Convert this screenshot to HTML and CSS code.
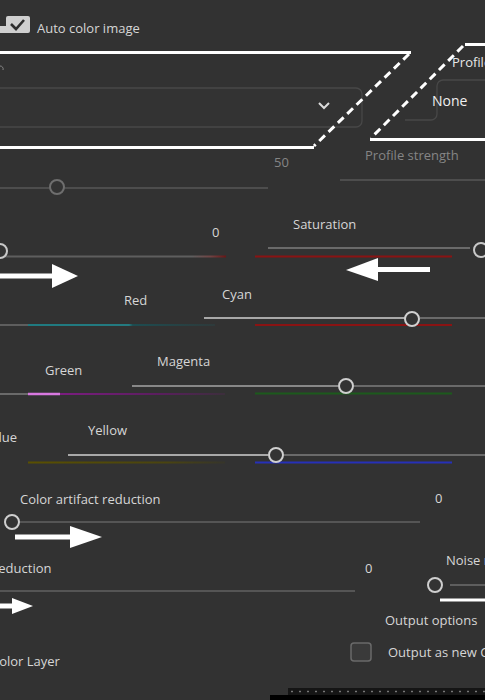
FILE: index.html
```html
<!DOCTYPE html>
<html>
<head>
<meta charset="utf-8">
<link rel="stylesheet" href="styles.css">
</head>
<body>
<div class="canvas">
  <svg class="gfx" width="485" height="700" viewBox="0 0 485 700">
    <defs>
      <linearGradient id="gr1" gradientUnits="userSpaceOnUse" x1="0" y1="0" x2="226" y2="0">
        <stop offset="0" stop-color="#5e5e5e"/><stop offset="0.85" stop-color="#5e5e5e"/><stop offset="0.93" stop-color="#704444"/><stop offset="1" stop-color="#6a1515"/>
      </linearGradient>
      <linearGradient id="teal" gradientUnits="userSpaceOnUse" x1="28" y1="0" x2="215" y2="0">
        <stop offset="0" stop-color="#1f7a80"/><stop offset="0.54" stop-color="#247a80"/><stop offset="0.56" stop-color="#1d4c50"/><stop offset="1" stop-color="#2e3a3b"/>
      </linearGradient>
      <linearGradient id="mag" gradientUnits="userSpaceOnUse" x1="60" y1="0" x2="225" y2="0">
        <stop offset="0" stop-color="#7b1d80"/><stop offset="0.6" stop-color="#5a1e5e"/><stop offset="1" stop-color="#3c2f3c"/>
      </linearGradient>
      <linearGradient id="oli" gradientUnits="userSpaceOnUse" x1="28" y1="0" x2="225" y2="0">
        <stop offset="0" stop-color="#5a5000"/><stop offset="0.7" stop-color="#4a4410"/><stop offset="1" stop-color="#36352a"/>
      </linearGradient>
    </defs>
    <!-- checkbox -->
    <rect x="6" y="16" width="24" height="17" rx="2" fill="#cfcfcf"/>
    <rect x="0" y="26" width="10" height="7" fill="#cfcfcf"/>
    <path d="M11 24 l5 5 l8 -9" stroke="#2e2e2e" stroke-width="2.6" fill="none"/>
    <!-- dropdown -->
    <path d="M0 88 H356 a6 6 0 0 1 6 6 V121 a6 6 0 0 1 -6 6 H0" stroke="#484848" stroke-width="1.3" fill="#333"/>
    <path d="M319 103 l5 5 l5 -5" stroke="#dcdcdc" stroke-width="2" fill="none"/>
    <path d="M0 66 a3 3 0 0 1 3 4" stroke="#888" stroke-width="1" fill="none"/>
    <!-- None box -->
    <path d="M485 80 H443 a6 6 0 0 0 -6 6 V114 a6 6 0 0 1 -6 6 H405" stroke="#484848" stroke-width="1.3" fill="none"/>
    <!-- annotation parallelograms -->
    <path d="M0 52.5 H411" stroke="#fff" stroke-width="3"/>
    <path d="M0 147.5 H314" stroke="#fff" stroke-width="3"/>
    <path d="M409 54 L314 146" stroke="#fff" stroke-width="3" stroke-dasharray="8 5"/>
    <path d="M465 44.5 H485" stroke="#fff" stroke-width="3"/>
    <path d="M463 46 L371 138" stroke="#fff" stroke-width="3" stroke-dasharray="8 5"/>
    <path d="M370 139.5 H485" stroke="#fff" stroke-width="3"/>
    <!-- profile strength track -->
    <path d="M340 180 H485" stroke="#4d4d4d" stroke-width="2"/>
    <!-- track 1 -->
    <path d="M0 188 H268" stroke="#4d4d4d" stroke-width="2"/>
    <circle cx="57" cy="187" r="7" fill="#333" stroke="#6e6e6e" stroke-width="2"/>
    <!-- saturation -->
    <path d="M268 248 H470" stroke="#6a6a6a" stroke-width="2"/>
    <circle cx="481" cy="250" r="7" fill="#333" stroke="#c8c8c8" stroke-width="2"/>
    <path d="M255 256.5 H452" stroke="#8a1313" stroke-width="2"/>
    <path d="M0 256.5 H226" stroke="url(#gr1)" stroke-width="2"/>
    <circle cx="0" cy="251" r="7" fill="#333" stroke="#c8c8c8" stroke-width="2"/>
    <!-- arrows -->
    <path d="M0 276 H62" stroke="#fff" stroke-width="5"/>
    <path d="M52 264 L78 276 L52 288 Z" fill="#fff"/>
    <path d="M430 269.5 H370" stroke="#fff" stroke-width="5"/>
    <path d="M378 258 L346 270 L378 281 Z" fill="#fff"/>
    <!-- cyan/red -->
    <path d="M204 318 H405" stroke="#a8a8a8" stroke-width="2"/>
    <path d="M420 318 H485" stroke="#6a6a6a" stroke-width="2"/>
    <path d="M255 325 H452" stroke="#8a1313" stroke-width="2"/>
    <circle cx="412" cy="319" r="7" fill="#333" stroke="#d0d0d0" stroke-width="2"/>
    <path d="M0 325 H28" stroke="#5e5e5e" stroke-width="2"/>
    <path d="M28 325 H215" stroke="url(#teal)" stroke-width="2"/>
    <!-- magenta/green -->
    <path d="M132 386 H338" stroke="#888" stroke-width="2"/>
    <path d="M354 386 H485" stroke="#6a6a6a" stroke-width="2"/>
    <path d="M255 393.5 H452" stroke="#1c5a1c" stroke-width="2"/>
    <circle cx="346" cy="386" r="7" fill="#333" stroke="#cfcfcf" stroke-width="2"/>
    <path d="M0 394 H28" stroke="#6a6a6a" stroke-width="2"/>
    <path d="M28 394 H60" stroke="#d878e0" stroke-width="2.5"/>
    <path d="M60 394 H225" stroke="url(#mag)" stroke-width="2"/>
    <!-- yellow/blue -->
    <path d="M68 455 H268" stroke="#a8a8a8" stroke-width="2"/>
    <path d="M284 455 H485" stroke="#6a6a6a" stroke-width="2"/>
    <path d="M255 462.5 H452" stroke="#2630b8" stroke-width="2"/>
    <circle cx="276" cy="455" r="7" fill="#333" stroke="#d0d0d0" stroke-width="2"/>
    <path d="M28 462.5 H225" stroke="url(#oli)" stroke-width="2"/>
    <!-- artifact -->
    <path d="M18 522 H420" stroke="#555" stroke-width="2"/>
    <circle cx="12" cy="522" r="7" fill="#333" stroke="#cfcfcf" stroke-width="2"/>
    <path d="M15 537 H80" stroke="#fff" stroke-width="5"/>
    <path d="M70 526 L102 537 L70 548 Z" fill="#fff"/>
    <!-- noise -->
    <path d="M0 591 H355" stroke="#555" stroke-width="2"/>
    <circle cx="435" cy="585" r="7" fill="#333" stroke="#cfcfcf" stroke-width="2"/>
    <path d="M450 585 H485" stroke="#5e5e5e" stroke-width="2"/>
    <path d="M440 600 H485" stroke="#fff" stroke-width="3"/>
    <path d="M0 606 H20" stroke="#fff" stroke-width="5"/>
    <path d="M12 598 L33 606 L12 614 Z" fill="#fff"/>
    <!-- output checkbox -->
    <rect x="351" y="643" width="20" height="18" rx="3" fill="#3a3a3a" stroke="#6a6a6a" stroke-width="1.5"/>
  </svg>

  <span class="lbl t-auto">Auto color image</span>
  <span class="lbl t-profile">Profile</span>
  <span class="lbl t-none">None</span>
  <span class="lbl dim t-strength">Profile strength</span>
  <span class="lbl dim t-50">50</span>
  <span class="lbl t-zero1">0</span>
  <span class="lbl t-sat">Saturation</span>
  <span class="lbl t-red">Red</span>
  <span class="lbl t-cyan">Cyan</span>
  <span class="lbl t-green">Green</span>
  <span class="lbl t-magenta">Magenta</span>
  <span class="lbl t-blue">Blue</span>
  <span class="lbl t-yellow">Yellow</span>
  <span class="lbl t-artifact">Color artifact reduction</span>
  <span class="lbl t-zero2">0</span>
  <span class="lbl t-reduction">reduction</span>
  <span class="lbl t-zero3">0</span>
  <span class="lbl t-noise">Noise reduction</span>
  <span class="lbl t-options">Output options</span>
  <span class="lbl t-asnew">Output as new Color Layer</span>
  <span class="lbl t-layer">Color Layer</span>

  <div class="dots"></div>
  <div class="bottom"></div>
</div>
</body>
</html>
```
FILE: styles.css
```css
html, body {
  margin: 0;
  padding: 0;
  background: #323232;
}
.canvas {
  position: relative;
  width: 485px;
  height: 700px;
  overflow: hidden;
  background: #323232;
  font-family: "Open Sans", "Noto Sans", sans-serif;
  font-size: 13px;
  line-height: 16px;
  color: #d6d6d6;
}
.gfx {
  position: absolute;
  left: 0;
  top: 0;
}
.lbl {
  position: absolute;
  white-space: nowrap;
}
.dim { color: #858585; }
.t-auto { left: 37px; top: 20px; }
.t-profile { left: 452px; top: 54px; color: #e8e8e8; }
.t-none { left: 432px; top: 93px; color: #f0f0f0; font-size: 14px; }
.t-strength { left: 365px; top: 147px; }
.t-50 { left: 274px; top: 154px; }
.t-zero1 { left: 212px; top: 224px; }
.t-sat { left: 293px; top: 216px; }
.t-red { left: 124px; top: 292px; }
.t-cyan { left: 222px; top: 286px; }
.t-green { left: 45px; top: 362px; }
.t-magenta { left: 157px; top: 353px; }
.t-blue { left: -10px; top: 429px; }
.t-yellow { left: 88px; top: 422px; }
.t-artifact { left: 20px; top: 491px; }
.t-zero2 { left: 435px; top: 490px; }
.t-reduction { left: -7px; top: 560px; }
.t-zero3 { left: 365px; top: 560px; }
.t-noise { left: 446px; top: 552px; }
.t-options { left: 385px; top: 612px; }
.t-asnew { left: 388px; top: 644px; }
.t-layer { left: -9px; top: 653px; }
.dots {
  position: absolute;
  left: 288px;
  right: 0;
  top: 688px;
  height: 7px;
  background-color: #151515;
  background-image: radial-gradient(circle, #777 0.8px, transparent 1.2px);
  background-size: 8px 7px;
}
.bottom {
  position: absolute;
  left: 270px;
  right: 0;
  top: 695px;
  height: 5px;
  background: #000;
}
```
